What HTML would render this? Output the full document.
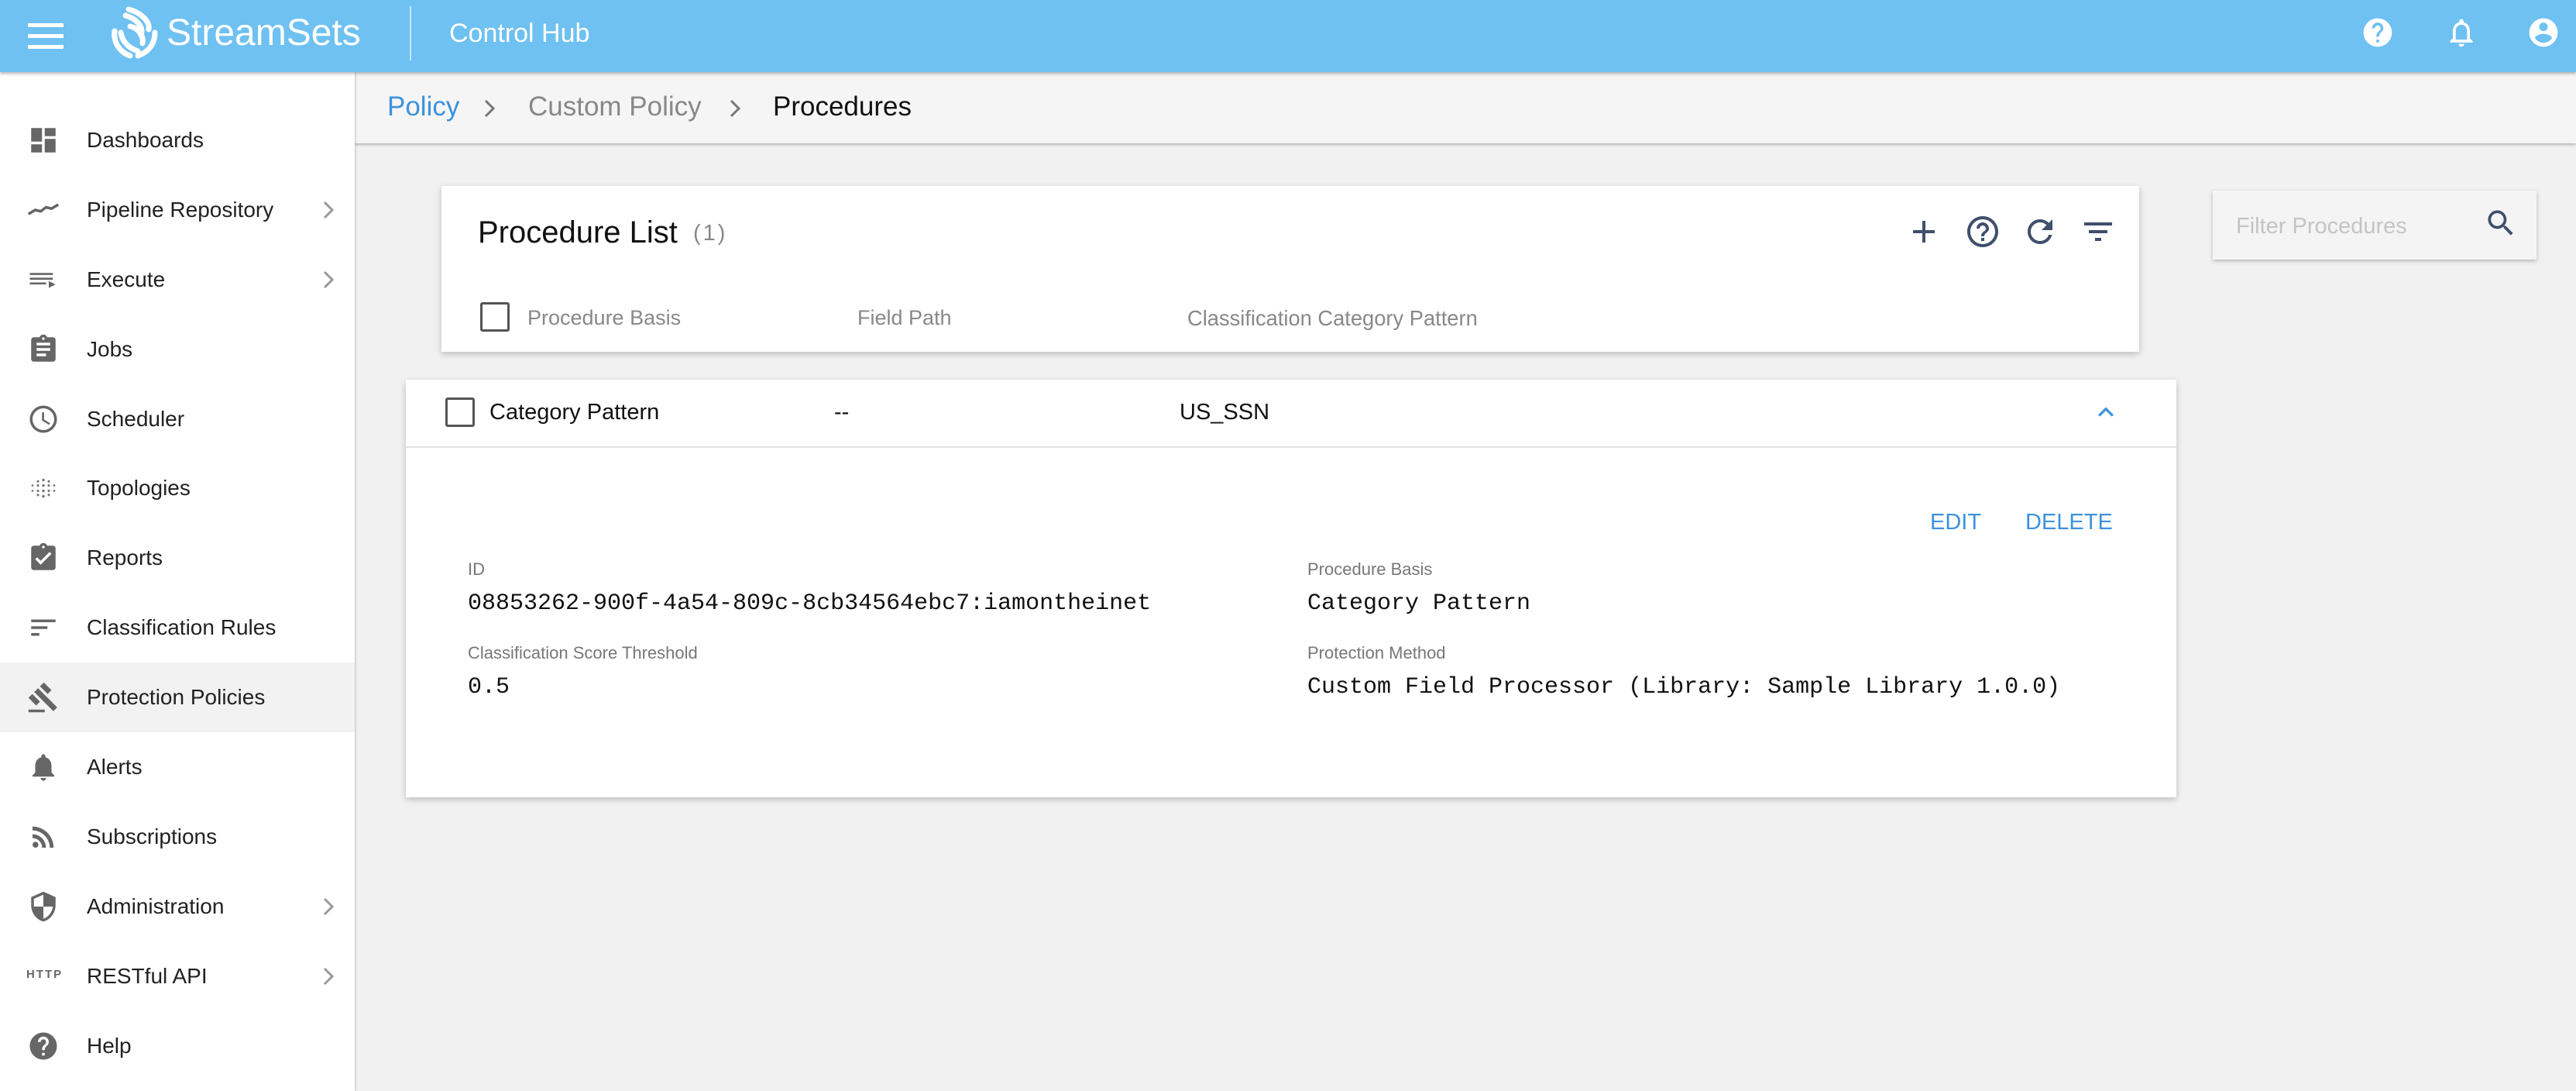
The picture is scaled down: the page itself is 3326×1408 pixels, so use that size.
<!DOCTYPE html>
<html><head><meta charset="utf-8"><style>
*{margin:0;padding:0;box-sizing:border-box}
body{width:3326px;height:1408px;overflow:hidden;background:#f1f1f1;font-family:"Liberation Sans",sans-serif;position:relative}
.abs{position:absolute}
#hdr{left:0;top:0;width:3326px;height:93px;background:#6ec1f1;box-shadow:0 2px 4px rgba(0,0,0,.3);z-index:5}
#side{left:0;top:93px;width:458px;height:1315px;background:#fff;box-shadow:1px 0 3px rgba(0,0,0,.2);z-index:3}
.item{position:absolute;left:0;width:458px;height:90px;display:flex;align-items:center}
.item .ic{position:absolute;left:35px;width:42px;height:42px;top:24px}
.item .tx{position:absolute;left:112px;font-size:28px;color:#222}
.item .ch{position:absolute;left:414px;top:30px}
#bc{left:458px;top:93px;width:2868px;height:92px;background:#f5f5f5;box-shadow:0 2px 3px rgba(0,0,0,.25);z-index:2}
.card{background:#fff;box-shadow:0 3px 8px rgba(0,0,0,.22)}
.lbl{font-size:22px;color:#777}
.mono{font-family:"Liberation Mono",monospace;font-size:30px;color:#111}
.cb{position:absolute;width:38px;height:38px;border:3px solid #555;border-radius:3px}
</style></head><body>
<div id="hdr" class="abs">
  <div class="abs" style="left:36px;top:30px;width:46px;height:5px;background:#fff"></div>
  <div class="abs" style="left:36px;top:44px;width:46px;height:5px;background:#fff"></div>
  <div class="abs" style="left:36px;top:58px;width:46px;height:5px;background:#fff"></div>
  <svg class="abs" style="left:138px;top:6px" width="74" height="72" viewBox="0 0 74 72">
    <g fill="none" stroke="#fff" stroke-width="7" stroke-linecap="round">
      <path d="M28 6 C44 10 56 22 54 32"/><path d="M24 14 C38 18 48 28 44 40"/>
      <path d="M10 34 C8 50 18 62 30 66"/><path d="M18 36 C20 48 28 56 40 60"/>
      <path d="M62 36 C62 52 52 62 40 66"/><path d="M30 28 C40 30 48 40 46 50"/>
    </g>
  </svg>
  <div class="abs" style="left:215px;top:15px;font-size:48px;color:#fff;font-weight:300">StreamSets</div>
  <div class="abs" style="left:529px;top:8px;width:2px;height:70px;background:rgba(255,255,255,.6)"></div>
  <div class="abs" style="left:580px;top:24px;font-size:34px;color:#fff">Control Hub</div>
  <svg class="abs" style="left:3048px;top:20px" width="44" height="44" viewBox="0 0 24 24"><path fill="#fff" d="M12 2C6.48 2 2 6.48 2 12s4.48 10 10 10 10-4.48 10-10S17.52 2 12 2zm1 17h-2v-2h2v2zm2.070-7.75l-.9.92C13.45 12.9 13 13.5 13 15h-2v-.5c0-1.1.45-2.1 1.17-2.83l1.24-1.26c.37-.36.59-.86.59-1.41 0-1.1-.9-2-2-2s-2 .9-2 2H8c0-2.21 1.79-4 4-4s4 1.790 4 4c0 .88-.36 1.68-.93 2.25z"/></svg>
  <svg class="abs" style="left:3156px;top:18px" width="44" height="48" viewBox="0 0 24 24"><path fill="#fff" d="M12 22c1.1 0 2-.9 2-2h-4c0 1.1.89 2 2 2zm6-6v-5c0-3.07-1.64-5.64-4.5-6.32V4c0-.83-.67-1.5-1.5-1.5s-1.5.67-1.5 1.5v.68C7.63 5.36 6 7.92 6 11v5l-2 2v1h16v-1l-2-2zm-2 1H8v-6c0-2.48 1.51-4.5 4-4.5s4 2.02 4 4.5v6z"/></svg>
  <svg class="abs" style="left:3262px;top:20px" width="44" height="44" viewBox="0 0 24 24"><path fill="#fff" d="M12 2C6.48 2 2 6.48 2 12s4.48 10 10 10 10-4.48 10-10S17.52 2 12 2zm0 3c1.66 0 3 1.34 3 3s-1.34 3-3 3-3-1.34-3-3 1.34-3 3-3zm0 14.2c-2.5 0-4.71-1.28-6-3.22.03-1.99 4-3.08 6-3.08 1.99 0 5.97 1.09 6 3.08-1.29 1.940-3.5 3.22-6 3.22z"/></svg>
</div>

<div id="side" class="abs">
  <div class="item" style="top:43px"><svg class="ic" viewBox="0 0 24 24"><path fill="#666" d="M3 13h8V3H3v10zm0 8h8v-6H3v6zm10 0h8V11h-8v10zm0-18v6h8V3h-8z"/></svg><span class="tx">Dashboards</span></div>
  <div class="item" style="top:133px"><svg class="ic" viewBox="0 0 24 24"><path fill="none" stroke="#666" stroke-width="2" d="M1 15 L6 12 L10 13 L14 10 L18 11 L23 8"/></svg><span class="tx">Pipeline Repository</span><svg class="ch" width="22" height="30" viewBox="0 0 22 30"><path d="M5 5l10 10-10 10" fill="none" stroke="#999" stroke-width="3"/></svg></div>
  <div class="item" style="top:223px"><svg class="ic" viewBox="0 0 24 24"><path fill="#666" d="M2 7h17v1.5H2zM2 10.5h17V12H2zM2 14h12v1.5H2zM16 13l5 2.5-5 2.5z"/></svg><span class="tx">Execute</span><svg class="ch" width="22" height="30" viewBox="0 0 22 30"><path d="M5 5l10 10-10 10" fill="none" stroke="#999" stroke-width="3"/></svg></div>
  <div class="item" style="top:313px"><svg class="ic" viewBox="0 0 24 24"><path fill="#666" d="M19 3h-4.18C14.4 1.84 13.3 1 12 1s-2.4.84-2.82 2H5c-1.1 0-2 .9-2 2v14c0 1.1.9 2 2 2h14c1.1 0 2-.9 2-2V5c0-1.1-.9-2-2-2zm-7 0c.55 0 1 .45 1 1s-.45 1-1 1-1-.45-1-1 .45-1 1-1zm2 14H7v-2h7v2zm3-4H7v-2h10v2zm0-4H7V7h10v2z"/></svg><span class="tx">Jobs</span></div>
  <div class="item" style="top:403px"><svg class="ic" viewBox="0 0 24 24"><path fill="#666" d="M11.99 2C6.47 2 2 6.48 2 12s4.47 10 9.99 10C17.52 22 22 17.52 22 12S17.52 2 11.99 2zM12 20c-4.42 0-8-3.58-8-8s3.58-8 8-8 8 3.58 8 8-3.58 8-8 8zm.5-13H11v6l5.25 3.150.75-1.23-4.5-2.67z"/></svg><span class="tx">Scheduler</span></div>
  <div class="item" style="top:492px"><svg class="ic" viewBox="0 0 24 24"><g fill="#777"><circle cx="4" cy="10" r=".8"/><circle cx="4" cy="14" r=".8"/><circle cx="8" cy="7" r=".9"/><circle cx="8" cy="10" r=".9"/><circle cx="8" cy="14" r=".9"/><circle cx="8" cy="17" r=".9"/><circle cx="12" cy="6" r="1"/><circle cx="12" cy="10" r="1"/><circle cx="12" cy="14" r="1"/><circle cx="12" cy="18" r="1"/><circle cx="16" cy="7" r=".9"/><circle cx="16" cy="10" r=".9"/><circle cx="16" cy="14" r=".9"/><circle cx="16" cy="17" r=".9"/><circle cx="20" cy="10" r=".8"/><circle cx="20" cy="14" r=".8"/></g></svg><span class="tx">Topologies</span></div>
  <div class="item" style="top:582px"><svg class="ic" viewBox="0 0 24 24"><path fill="#666" d="M19 3h-4.18C14.4 1.84 13.3 1 12 1s-2.4.84-2.82 2H5c-1.1 0-2 .9-2 2v14c0 1.1.9 2 2 2h14c1.1 0 2-.9 2-2V5c0-1.1-.9-2-2-2zm-7 0c.55 0 1 .45 1 1s-.45 1-1 1-1-.45-1-1 .45-1 1-1zm-2 14l-4-4 1.41-1.41L10 14.17l6.59-6.59L18 9l-8 8z"/></svg><span class="tx">Reports</span></div>
  <div class="item" style="top:672px"><svg class="ic" viewBox="0 0 24 24"><path fill="#666" d="M3 18h6v-2H3v2zM3 6v2h18V6H3zm0 7h12v-2H3v2z"/></svg><span class="tx">Classification Rules</span></div>
  <div class="item" style="top:762px;background:#f2f2f2"><svg class="ic" viewBox="0 0 24 24"><path fill="#666" d="M1 21h12v2H1zM5.24 8.07l2.83-2.83 14.14 14.14-2.83 2.83zM12.32 1l5.66 5.66-2.83 2.830-5.66-5.66zM3.83 9.48l5.66 5.66-2.83 2.83L1 12.31z"/></svg><span class="tx">Protection Policies</span></div>
  <div class="item" style="top:852px"><svg class="ic" viewBox="0 0 24 24"><path fill="#666" d="M12 22c1.1 0 2-.9 2-2h-4c0 1.1.89 2 2 2zm6-6v-5c0-3.07-1.64-5.64-4.5-6.32V4c0-.83-.67-1.5-1.5-1.5s-1.5.67-1.5 1.5v.68C7.63 5.36 6 7.92 6 11v5l-2 2v1h16v-1l-2-2z"/></svg><span class="tx">Alerts</span></div>
  <div class="item" style="top:942px"><svg class="ic" viewBox="0 0 24 24"><circle cx="6.18" cy="17.82" r="2.18" fill="#666"/><path fill="#666" d="M4 4.44v2.83c7.03 0 12.73 5.7 12.73 12.73h2.83c0-8.59-6.97-15.56-15.56-15.56zm0 5.66v2.83c3.9 0 7.07 3.17 7.07 7.07h2.83c0-5.47-4.43-9.9-9.9-9.9z"/></svg><span class="tx">Subscriptions</span></div>
  <div class="item" style="top:1032px"><svg class="ic" viewBox="0 0 24 24"><path fill="#666" d="M12 1L3 5v6c0 5.55 3.84 10.74 9 12 5.16-1.26 9-6.45 9-12V5l-9-4zm0 10.99h7c-.53 4.12-3.28 7.79-7 8.94V12H5V6.3l7-3.11v8.8z"/></svg><span class="tx">Administration</span><svg class="ch" width="22" height="30" viewBox="0 0 22 30"><path d="M5 5l10 10-10 10" fill="none" stroke="#999" stroke-width="3"/></svg></div>
  <div class="item" style="top:1122px"><span class="abs" style="left:34px;top:34px;font-size:15px;font-weight:bold;color:#666;letter-spacing:2px">HTTP</span><span class="tx">RESTful API</span><svg class="ch" width="22" height="30" viewBox="0 0 22 30"><path d="M5 5l10 10-10 10" fill="none" stroke="#999" stroke-width="3"/></svg></div>
  <div class="item" style="top:1212px"><svg class="ic" viewBox="0 0 24 24"><path fill="#666" d="M12 2C6.48 2 2 6.48 2 12s4.48 10 10 10 10-4.48 10-10S17.52 2 12 2zm1 17h-2v-2h2v2zm2.07-7.75l-.9.92C13.45 12.9 13 13.5 13 15h-2v-.5c0-1.1.45-2.1 1.17-2.83l1.24-1.26c.37-.36.59-.86.59-1.41 0-1.1-.9-2-2-2s-2 .9-2 2H8c0-2.21 1.79-4 4-4s4 1.79 4 4c0 .88-.36 1.68-.93 2.25z"/></svg><span class="tx">Help</span></div>
</div>

<div id="bc" class="abs">
  <span class="abs" style="left:42px;top:25px;font-size:35px;color:#3d92dc">Policy</span>
  <svg class="abs" style="left:164px;top:31px" width="22" height="32" viewBox="0 0 22 32"><path d="M5 6l10 10-10 10" fill="none" stroke="#777" stroke-width="3"/></svg>
  <span class="abs" style="left:224px;top:25px;font-size:35px;color:#888">Custom Policy</span>
  <svg class="abs" style="left:481px;top:31px" width="22" height="32" viewBox="0 0 22 32"><path d="M5 6l10 10-10 10" fill="none" stroke="#777" stroke-width="3"/></svg>
  <span class="abs" style="left:540px;top:25px;font-size:35px;color:#111">Procedures</span>
</div>

<div class="abs card" style="left:570px;top:240px;width:2192px;height:214px">
  <span class="abs" style="left:47px;top:38px;font-size:40px;color:#111">Procedure List</span>
  <span class="abs" style="left:325px;top:45px;font-size:29px;color:#888;letter-spacing:3px">(1)</span>
  <svg class="abs" style="left:1890px;top:35px" width="48" height="48" viewBox="0 0 24 24"><path fill="#3f4f6b" d="M19 13h-6v6h-2v-6H5v-2h6V5h2v6h6v2z"/></svg>
  <svg class="abs" style="left:1966px;top:35px" width="48" height="48" viewBox="0 0 24 24"><path fill="#3f4f6b" d="M11 18h2v-2h-2v2zm1-16C6.48 2 2 6.48 2 12s4.48 10 10 10 10-4.48 10-10S17.52 2 12 2zm0 18c-4.41 0-8-3.59-8-8s3.59-8 8-8 8 3.59 8 8-3.59 8-8 8zm0-14c-2.21 0-4 1.79-4 4h2c0-1.1.9-2 2-2s2 .9 2 2c0 2-3 1.75-3 5h2c0-2.25 3-2.5 3-5 0-2.21-1.79-4-4-4z"/></svg>
  <svg class="abs" style="left:2040px;top:35px" width="48" height="48" viewBox="0 0 24 24"><path fill="#3f4f6b" d="M17.65 6.35C16.2 4.9 14.21 4 12 4c-4.42 0-7.99 3.58-7.99 8s3.57 8 7.99 8c3.73 0 6.84-2.55 7.73-6h-2.08c-.82 2.33-3.04 4-5.65 4-3.31 0-6-2.69-6-6s2.69-6 6-6c1.66 0 3.14.69 4.22 1.78L13 11h7V4l-2.35 2.35z"/></svg>
  <svg class="abs" style="left:2115px;top:35px" width="48" height="48" viewBox="0 0 24 24"><path fill="#3f4f6b" d="M10 18h4v-2h-4v2zM3 6v2h18V6H3zm3 7h12v-2H6v2z"/></svg>
  <div class="cb" style="left:50px;top:150px"></div>
  <span class="abs lbl" style="left:111px;top:155px;font-size:27px;color:#888">Procedure Basis</span>
  <span class="abs lbl" style="left:537px;top:155px;font-size:27px;color:#888">Field Path</span>
  <span class="abs lbl" style="left:963px;top:155px;font-size:27.3px;color:#888">Classification Category Pattern</span>
</div>

<div class="abs card" style="left:2857px;top:246px;width:418px;height:89px;box-shadow:0 2px 5px rgba(0,0,0,.25);background:#f4f4f4">
  <span class="abs" style="left:30px;top:30px;font-size:29px;color:#c4c4c4">Filter Procedures</span>
  <svg class="abs" style="left:350px;top:20px" width="44" height="44" viewBox="0 0 24 24"><path fill="#3f4f6b" d="M15.5 14h-.79l-.28-.27C15.41 12.59 16 11.11 16 9.5 16 5.91 13.09 3 9.5 3S3 5.91 3 9.5 5.91 16 9.5 16c1.61 0 3.09-.59 4.23-1.57l.27.28v.79l5 4.99L20.49 19l-4.99-5zm-6 0C7.01 14 5 11.99 5 9.5S7.01 5 9.5 5 14 7.01 14 9.5 11.99 14 9.5 14z"/></svg>
</div>

<div class="abs card" style="left:524px;top:490px;width:2286px;height:539px">
  <div class="cb" style="left:51px;top:23px"></div>
  <span class="abs" style="left:108px;top:26px;font-size:29px;color:#111">Category Pattern</span>
  <span class="abs" style="left:553px;top:26px;font-size:29px;color:#111">--</span>
  <span class="abs" style="left:999px;top:26px;font-size:29px;color:#111">US_SSN</span>
  <svg class="abs" style="left:2175px;top:22px" width="40" height="40" viewBox="0 0 24 24"><path fill="#3d92dc" d="M7.41 15.41L12 10.83l4.59 4.58L18 14l-6-6-6 6z"/></svg>
  <div class="abs" style="left:0;top:86px;width:2286px;height:2px;background:#e2e2e2"></div>
  <span class="abs" style="left:1968px;top:168px;font-size:29px;color:#3d92dc">EDIT</span>
  <span class="abs" style="left:2091px;top:168px;font-size:29px;color:#3d92dc">DELETE</span>
  <span class="abs lbl" style="left:80px;top:232px">ID</span>
  <span class="abs mono" style="left:80px;top:272px">08853262-900f-4a54-809c-8cb34564ebc7:iamontheinet</span>
  <span class="abs lbl" style="left:80px;top:340px">Classification Score Threshold</span>
  <span class="abs mono" style="left:80px;top:380px">0.5</span>
  <span class="abs lbl" style="left:1164px;top:232px">Procedure Basis</span>
  <span class="abs mono" style="left:1164px;top:272px">Category Pattern</span>
  <span class="abs lbl" style="left:1164px;top:340px">Protection Method</span>
  <span class="abs mono" style="left:1164px;top:380px">Custom Field Processor (Library: Sample Library 1.0.0)</span>
</div>
</body></html>
